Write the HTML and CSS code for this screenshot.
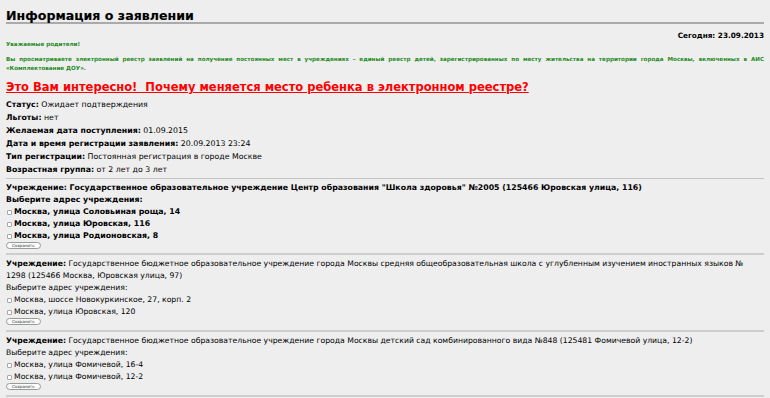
FILE: index.html
```html
<!DOCTYPE html>
<html lang="ru">
  <head>
    <meta charset="UTF-8" />
    <title>Информация о заявлении</title>
    <link rel="stylesheet" href="styles.css">
  </head>
  <body>
    <div class="page">
      <!-- Заголовок -->
      <h1 class="title">Информация о заявлении</h1>
      <div class="today">Сегодня: 23.09.2013</div>

      <!-- Обращение к родителям -->
      <p class="notice notice-head">Уважаемые родители!</p>
      <p class="notice notice-text">Вы просматриваете электронный реестр заявлений на получение постоянных мест в учреждениях – единый реестр детей, зарегистрированных по месту жительства на территории города Москвы, включенных в АИС «Комплектование ДОУ».</p>

      <a class="promo" href="#">Это Вам интересно!&nbsp; Почему меняется место ребенка в электронном реестре?</a>

      <!-- Сведения о заявлении -->
      <div class="info">
        <div><b>Статус:</b> Ожидает подтверждения</div>
        <div><b>Льготы:</b> нет</div>
        <div><b>Желаемая дата поступления:</b> 01.09.2015</div>
        <div><b>Дата и время регистрации заявления:</b> 20.09.2013 23:24</div>
        <div><b>Тип регистрации:</b> Постоянная регистрация в городе Москве</div>
        <div><b>Возрастная группа:</b> от 2 лет до 3 лет</div>
      </div>

      <!-- Учреждения -->
      <form class="org org-bold">
        <div><b>Учреждение:</b> Государственное образовательное учреждение Центр образования "Школа здоровья" №2005 (125466 Юровская улица, 116)</div>
        <div>Выберите адрес учреждения:</div>
        <label class="org-row"><input type="checkbox" />Москва, улица Соловьиная роща, 14</label>
        <label class="org-row"><input type="checkbox" />Москва, улица Юровская, 116</label>
        <label class="org-row"><input type="checkbox" />Москва, улица Родионовская, 8</label>
        <button type="button" class="save">Сохранить</button>
      </form>

      <form class="org">
        <div><b>Учреждение:</b> Государственное бюджетное образовательное учреждение города Москвы средняя общеобразовательная школа с углубленным изучением иностранных языков № 1298 (125466 Москва, Юровская улица, 97)</div>
        <div>Выберите адрес учреждения:</div>
        <label class="org-row"><input type="checkbox" />Москва, шоссе Новокуркинское, 27, корп. 2</label>
        <label class="org-row"><input type="checkbox" />Москва, улица Юровская, 120</label>
        <button type="button" class="save">Сохранить</button>
      </form>

      <form class="org">
        <div><b>Учреждение:</b> Государственное бюджетное образовательное учреждение города Москвы детский сад комбинированного вида №848 (125481 Фомичевой улица, 12-2)</div>
        <div>Выберите адрес учреждения:</div>
        <label class="org-row"><input type="checkbox" />Москва, улица Фомичевой, 16-4</label>
        <label class="org-row"><input type="checkbox" />Москва, улица Фомичевой, 12-2</label>
        <button type="button" class="save">Сохранить</button>
      </form>
    </div>
  </body>
</html>
```

FILE: styles.css
```css
/* Page base */
body {
  background: #eeeeee;
  font-family: "DejaVu Sans", Verdana, sans-serif;
  color: #000;
  margin: 0;
}
.page {
  padding: 9px 6px 0 6px;
}
.title {
  font-size: 12.6px;
  font-weight: bold;
  margin: 0;
  line-height: 13px;
  padding-bottom: 0;
  border-bottom: 2px solid #aaaaaa;
  text-shadow: 0 0 1px #bbb;
}
.today {
  text-align: right;
  font-size: 7.3px;
  font-weight: bold;
  line-height: 9px;
  margin-top: 7px;
}
.notice {
  color: #1e8c1e;
  font-size: 5.6px;
  font-weight: bold;
  margin: 0;
  line-height: 9px;
  text-align: justify;
}
.notice-head {
  margin-top: 0;
}
.notice-text {
  margin-top: 6px;
}
.promo {
  display: block;
  color: #ff0000;
  font-size: 11.5px;
  font-weight: bold;
  margin-top: 7px;
  line-height: 14px;
}
.info {
  margin-top: 4px;
  font-size: 7.8px;
  line-height: 13px;
  padding-bottom: 2px;
  border-bottom: 1px solid #c4c4c4;
}
/* Institution blocks */
.org {
  font-size: 7.7px;
  line-height: 12px;
  padding: 3px 0 5px 0;
  border-bottom: 2px solid #cdcdcd;
  margin: 0;
}
.org-bold {
  font-weight: bold;
  font-size: 7.8px;
  padding-bottom: 4px;
}
.org-row {
  display: flex;
  align-items: center;
}
.org-row input {
  appearance: none;
  width: 5px;
  height: 5px;
  margin: 0 2px 0 1px;
  border: 1px solid #a8a8a8;
  border-radius: 1px;
  background: #fff;
}
.save {
  display: block;
  font-family: "DejaVu Sans", Verdana, sans-serif;
  font-size: 4px;
  line-height: 5px;
  height: 7px;
  padding: 0 5px;
  border: 1px solid #9a9a9a;
  border-radius: 4px;
  background: #fbfbfb;
  color: #333;
}
```
